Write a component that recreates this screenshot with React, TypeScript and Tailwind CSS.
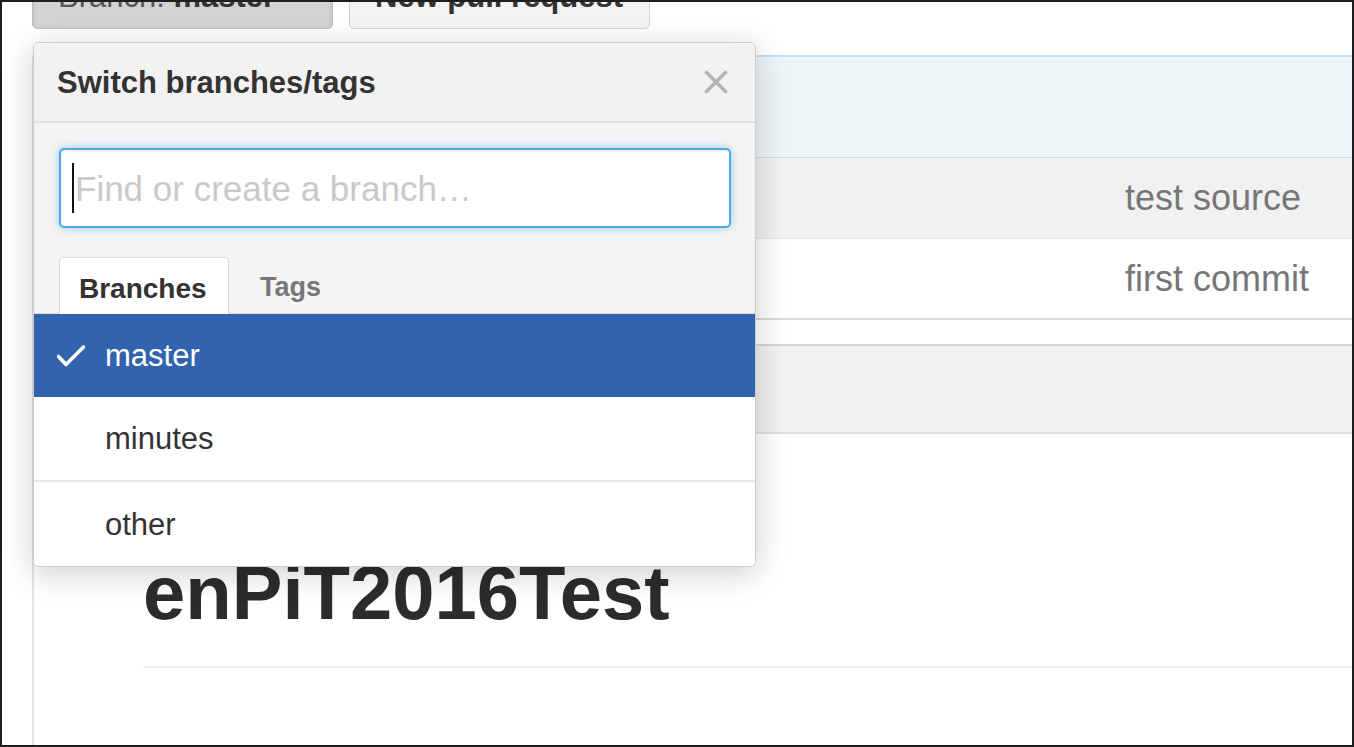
import React from "react";

const font = { fontFamily: '"Liberation Sans", Arial, Helvetica, sans-serif' };

function Check() {
  return (
    <svg width="28" height="22" viewBox="0 0 28 22" fill="none">
      <path d="M1.5 11.5 L9 19.5 L26.5 2" stroke="#ffffff" strokeWidth="3.6" strokeLinecap="round" strokeLinejoin="round" />
    </svg>
  );
}

function Close() {
  return (
    <svg width="24" height="24" viewBox="0 0 24 24" fill="none">
      <path d="M2.5 2.5 L21.5 21.5 M21.5 2.5 L2.5 21.5" stroke="#b4b4b4" strokeWidth="3.6" strokeLinecap="round" />
    </svg>
  );
}

export default function App() {
  return (
    <div
      className="relative w-[1354px] h-[747px] overflow-hidden bg-white border-2 border-[#1e1e1e]"
      style={font}
    >
      {/* top buttons (cut off at top) */}
      <div className="flex gap-[16px] ml-[30px] -mt-[39px] h-[66px]">
        <div className="w-[301px] h-[66px] rounded-[5px] bg-[#d3d3d3] border border-[#bdbdbd] shadow-[inset_0_2px_4px_rgba(0,0,0,0.12)] flex items-center pl-[25px] text-[31px] leading-[31px] text-[#555]">
          <span>Branch:&nbsp;</span>
          <span className="font-bold text-[#333]">master</span>
        </div>
        <div className="w-[301px] h-[66px] rounded-[5px] bg-[#f3f3f3] border border-[#d3d3d3] flex items-center pl-[25px] text-[31px] leading-[31px] font-bold text-[#333]">
          New pull request
        </div>
      </div>

      {/* file box behind the dropdown */}
      <div className="ml-[30px] mt-[26px] border-l-2 border-[#e3e3e3] h-[700px]">
        <div className="h-[103px] bg-[#eef5f9] border-t-2 border-b border-[#c7dfee]" />
        <div className="h-[80px] bg-[#f1f1f1] flex items-center pl-[1091px] text-[36px] leading-[36px] text-[#767676] whitespace-nowrap">
          test source
        </div>
        <div className="h-[82px] bg-white border-t border-b-2 border-t-[#e6e6e6] border-b-[#dadada] flex items-center pl-[1091px] text-[36px] leading-[36px] text-[#767676] whitespace-nowrap">
          first commit
        </div>
        <div className="mt-[24px] h-[90px] bg-[#f1f1f1] border-t-2 border-b-2 border-t-[#d6d6d6] border-b-[#e0e0e0]" />
        <div className="pl-[109px]">
          <h1 className="mt-[121px] text-[76px] leading-[76px] font-bold text-[#2c2c2c] tracking-[0px] whitespace-nowrap">
            enPiT2016Test
          </h1>
          <div className="mt-[35px] h-[2px] bg-[#eeeeee]" />
        </div>
      </div>

      {/* dropdown */}
      <div className="absolute left-[31px] top-[40px] w-[723px] h-[525px] bg-white border border-[#cdcdcd] rounded-[5px] overflow-hidden shadow-[0_6px_32px_rgba(0,0,0,0.2)] flex flex-col">
        <div className="h-[80px] shrink-0 bg-[#f2f2f2] border-b-2 border-[#e2e2e2] flex items-center justify-between pl-[23px] pr-[27px]">
          <span className="text-[31px] leading-[31px] font-bold text-[#333]">Switch branches/tags</span>
          <Close />
        </div>
        <div className="bg-[#f4f4f4] pt-[25px] px-[25px] pr-[24px] shrink-0">
          <div className="h-[80px] bg-white border-2 border-[#51a7e8] rounded-[5px] shadow-[0_0_8px_rgba(81,167,232,0.55),inset_0_1px_2px_rgba(0,0,0,0.08)] flex items-center pl-[11px]">
            <span className="w-[2px] h-[50px] bg-[#111]" />
            <span className="ml-[1px] text-[35px] leading-[35px] text-[#c9c9c9] whitespace-nowrap">
              Find or create a branch…
            </span>
          </div>
          <div className="mt-[29px] -mx-[25px] pl-[25px] flex items-end h-[57px] border-b border-[#dadada]">
            <div className="relative -mb-px w-[170px] h-[57px] bg-white border border-b-0 border-[#dadada] rounded-t-[5px] flex items-center pl-[19px] pt-[6px] text-[28px] leading-[28px] font-bold text-[#333]">
              Branches
            </div>
            <div className="ml-[12px] h-[57px] flex items-center pl-[19px] pt-[6px] text-[27px] leading-[27px] font-bold text-[#777]">
              Tags
            </div>
          </div>
        </div>
        <div className="h-[83px] shrink-0 bg-[#3163af] flex items-center pl-[23px] text-[31px] leading-[31px] text-white">
          <span className="w-[28px] flex items-center"><Check /></span>
          <span className="ml-[20px]">master</span>
        </div>
        <div className="h-[85px] shrink-0 border-b-2 border-[#e8e8e8] flex items-center pl-[71px] text-[31px] leading-[31px] text-[#333]">
          minutes
        </div>
        <div className="flex-1 flex items-center pl-[71px] text-[31px] leading-[31px] text-[#333]">
          other
        </div>
      </div>
    </div>
  );
}
